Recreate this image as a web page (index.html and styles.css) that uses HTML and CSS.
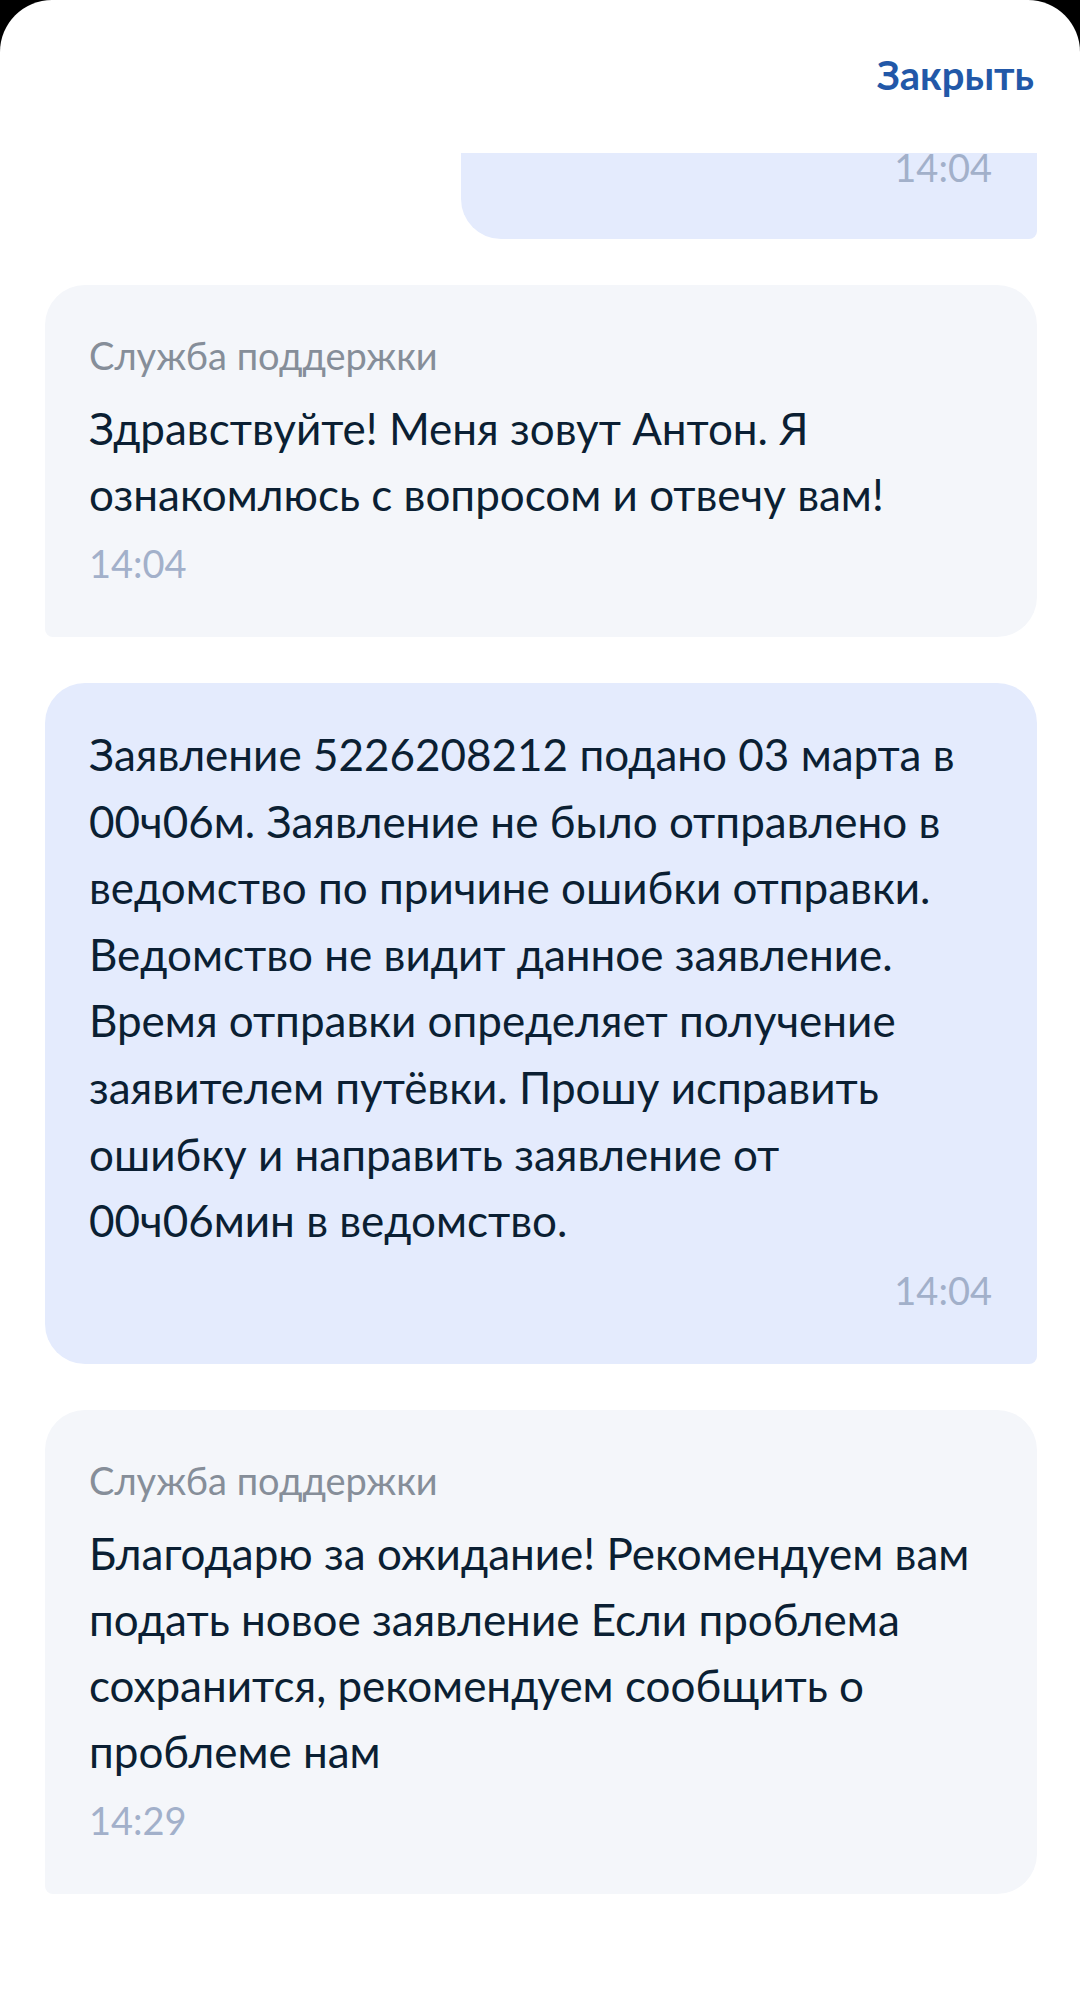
FILE: index.html
```html
<!DOCTYPE html>
<html lang="ru">
<head>
<meta charset="utf-8">
<title>Чат поддержки</title>
<link rel="stylesheet" href="styles.css">
</head>
<body>
<div class="sheet">
  <header class="header">
    <button class="close">Закрыть</button>
  </header>
  <main class="chat">
    <div class="msg msg-user msg-cut">
      <div class="time">14:04</div>
    </div>
    <div class="msg msg-support">
      <div class="author">Служба поддержки</div>
      <div class="text">Здравствуйте! Меня зовут Антон. Я ознакомлюсь с вопросом и отвечу вам!</div>
      <div class="time">14:04</div>
    </div>
    <div class="msg msg-user msg-long">
      <div class="text">Заявление 5226208212 подано 03 марта в 00ч06м. Заявление не было отправлено в ведомство по причине ошибки отправки. Ведомство не видит данное заявление. Время отправки определяет получение заявителем путёвки. Прошу исправить ошибку и направить заявление от 00ч06мин в ведомство.</div>
      <div class="time">14:04</div>
    </div>
    <div class="msg msg-support">
      <div class="author">Служба поддержки</div>
      <div class="text">Благодарю за ожидание! Рекомендуем вам подать новое заявление Если проблема сохранится, рекомендуем сообщить о проблеме нам</div>
      <div class="time">14:29</div>
    </div>
  </main>
</div>
</body>
</html>
```
FILE: styles.css
```css
* { box-sizing: border-box; }
html, body {
  margin: 0;
  padding: 0;
  background: #000;
}
body {
  width: 1080px;
  height: 1998px;
  overflow: hidden;
  font-family: "Lato", "Noto Sans", sans-serif;
}
.sheet {
  background: #fff;
  height: 1998px;
  border-radius: 52px 52px 0 0;
  display: flex;
  flex-direction: column;
}
.header {
  height: 153px;
  flex: none;
  display: flex;
  justify-content: flex-end;
  align-items: flex-start;
  padding: 49px 46px 0 0;
}
.close {
  border: 0;
  background: none;
  padding: 0;
  font-family: "Lato", sans-serif;
  font-weight: 700;
  font-size: 40px;
  line-height: 52px;
  color: #2258a8;
}
.chat {
  flex: 1;
  overflow: hidden;
  display: flex;
  flex-direction: column;
  align-items: flex-end;
  gap: 46px;
  padding: 0 43px 0 45px;
}
.msg {
  width: 100%;
  border-radius: 40px;
  padding: 44px 45px 52px 44px;
}
.msg-support {
  background: #f4f6fa;
  border-bottom-left-radius: 8px;
  align-self: stretch;
}
.msg-user {
  background: #e4ebfd;
  border-bottom-right-radius: 8px;
}
.msg-long {
  padding-top: 38px;
  padding-bottom: 52px;
}
.msg-long .text { line-height: 66.6px; }
.msg-cut {
  width: 576px;
  padding-top: 0;
  padding-bottom: 58px;
  border-top-left-radius: 0;
  border-top-right-radius: 0;
}
.author {
  font-size: 38px;
  line-height: 52px;
  color: #868e99;
  margin-bottom: 14px;
}
.text {
  font-size: 44px;
  line-height: 66px;
  color: #0b1f33;
}
.time {
  font-size: 38px;
  line-height: 44px;
  color: #a2b0ca;
  margin-top: 14px;
}
.msg-cut .time {
  margin-top: 0;
  line-height: 28px;
}
.msg-user .time { text-align: right; }
```
